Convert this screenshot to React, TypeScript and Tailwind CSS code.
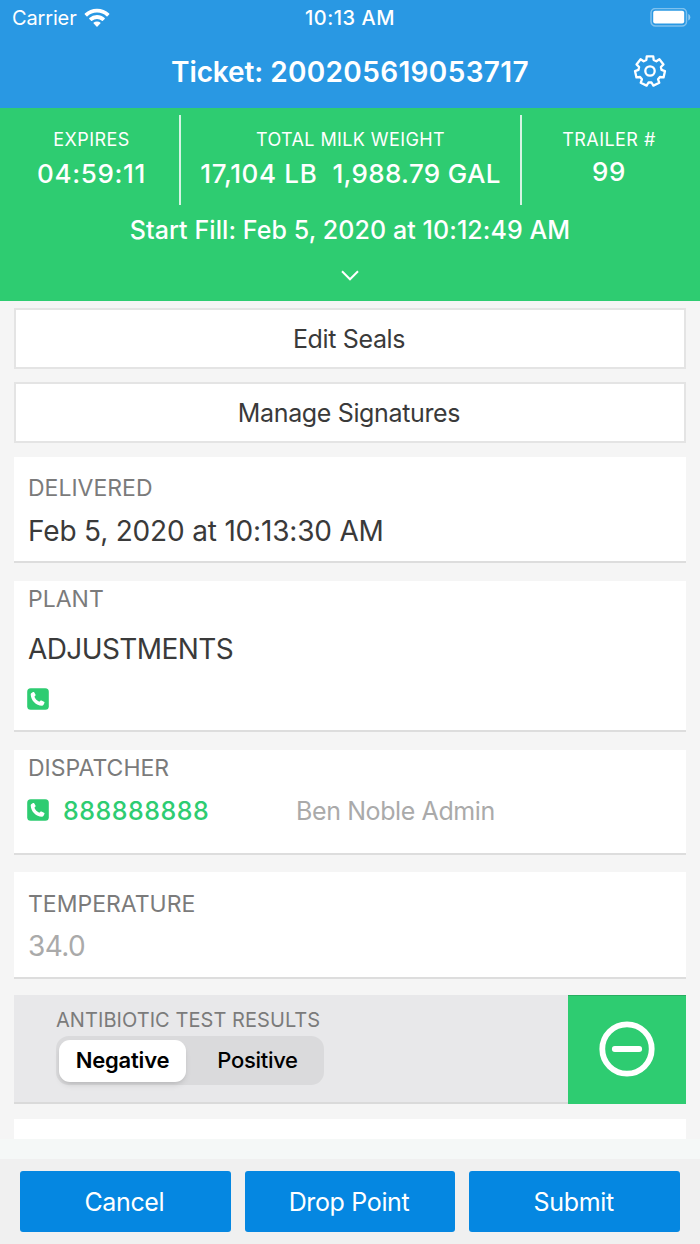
import clsx from "clsx";
import type { ReactNode } from "react";

function WifiIcon() {
  return (
    <svg width="26" height="20" viewBox="0 0 26 20" fill="#fff">
      <path d="M13 0.8c4.700 0 9 1.800 12.200 4.800.3.3.3.7 0 1l-1.700 1.700c-.3.3-.7.3-1 0A13.600 13.600 0 0 0 13 4.600a13.600 13.600 0 0 0-9.500 3.700c-.3.3-.7.3-1 0L.8 6.600c-.3-.3-.3-.7 0-1A17.700 17.700 0 0 1 13 .8z" />
      <path d="M13 7.100c2.900 0 5.600 1.100 7.700 3 .3.3.3.7 0 1l-1.800 1.700c-.3.3-.7.3-1 0a7.200 7.200 0 0 0-9.800 0c-.3.3-.7.3-1 0l-1.800-1.700c-.3-.3-.3-.7 0-1a11.400 11.400 0 0 1 7.700-3z" />
      <path d="M13 13.400c1.300 0 2.400.4 3.300 1.200.3.3.3.7 0 1l-2.800 2.800c-.3.3-.7.3-1 0l-2.800-2.800c-.3-.3-.3-.7 0-1 .9-.8 2-1.200 3.300-1.200z" />
    </svg>
  );
}

function BatteryIcon() {
  return (
    <svg width="42" height="20" viewBox="0 0 42 20" fill="none">
      <rect x="1" y="0.500" width="35.500" height="17.500" rx="4.500" stroke="#fff" strokeOpacity=".4" strokeWidth="1.500" />
      <rect x="3.200" y="2.800" width="31" height="12.800" rx="2" fill="#fff" />
      <path d="M38.300 6c1.200.5 2 1.800 2 3.300s-.8 2.800-2 3.300z" fill="#fff" fillOpacity=".5" />
    </svg>
  );
}

function gearPath() {
  const teeth = 7;
  const points: string[] = [];
  for (let i = 0; i < teeth; i++) {
    const mid = (i / teeth) * Math.PI * 2 - Math.PI / 2;
    [
      [-0.32, 11.6],
      [-0.22, 15],
      [0.22, 15],
      [0.32, 11.6],
    ].forEach(([offset, radius]) => {
      points.push(
        `${17 + radius * Math.cos(mid + offset)} ${17 + radius * Math.sin(mid + offset)}`,
      );
    });
  }
  return `M${points.join("L")}Z`;
}

function GearIcon() {
  return (
    <svg width="34" height="34" viewBox="0 0 34 34" fill="none" stroke="#fff" strokeWidth="2.300" strokeLinejoin="round">
      <path d={gearPath()} />
      <circle cx="17" cy="17" r="4.700" />
    </svg>
  );
}

function PhoneIcon() {
  return (
    <svg className="-ml-px" width="22" height="22" viewBox="0 0 22 22">
      <rect x="0.200" y="0.200" width="21.600" height="21.600" rx="3.500" fill="#2ecc71" />
      <path
        d="M4.200 5.300 6 4.100c.5-.3 1-.2 1.300.3l1.200 2.100c.2.400.1.900-.2 1.200l-.9 1c.9 2.200 2.600 4 4.900 5l1-.9c.3-.3.8-.4 1.200-.2l2.500 1.200c.5.3.7.8.4 1.300l-1 1.900c-.3.5-.8.800-1.400.8C8.900 17.600 4 12.600 3.700 6.500c0-.5.1-.9.5-1.200z"
        fill="#fff"
      />
    </svg>
  );
}

function Card({ children, className }: { children?: ReactNode; className?: string }) {
  return (
    <section className={clsx("border-b-2 border-[#dddddd] bg-white pl-3.5", className)}>
      {children}
    </section>
  );
}

function CardLabel({ children }: { children: ReactNode }) {
  return <h2 className="text-[23px] leading-7 text-[#7b7b7b]">{children}</h2>;
}

function OutlineButton({ children }: { children: ReactNode }) {
  return (
    <button className="h-[61px] w-full border-2 border-[#e4e4e4] bg-white pt-0.5 pr-0.5 text-[25px] tracking-[-0.35px] text-[#3a3a3a]">
      {children}
    </button>
  );
}

const actions = ["Cancel", "Drop Point", "Submit"];

export default function App() {
  return (
    <div className="flex h-[1244px] w-[700px] flex-col overflow-hidden bg-[#f5f5f5] font-['Inter','Liberation_Sans',sans-serif]">
      <header className="h-[108px] shrink-0 bg-[#2998e3] text-white">
        <div className="grid h-9 grid-cols-3 items-center pr-2 pl-3 text-[20px]">
          <div className="flex items-center gap-[7px]">
            <span className="tracking-[-0.15px]">Carrier</span>
            <WifiIcon />
          </div>
          <span className="pr-1 text-center font-medium tracking-[0.5px]">10:13 AM</span>
          <span className="flex justify-end">
            <BatteryIcon />
          </span>
        </div>
        <div className="grid h-[70px] grid-cols-[1fr_auto_1fr] items-center px-[33px]">
          <h1 className="col-start-2 flex gap-[7px] pt-px text-[28px] font-semibold">
            <span className="tracking-[-0.1px]">Ticket:</span>
            <span className="tracking-[0.35px]">200205619053717</span>
          </h1>
          <span className="flex justify-end">
            <GearIcon />
          </span>
        </div>
      </header>

      <section className="h-[193px] shrink-0 bg-[#2ecc71] pt-[7px] text-center text-white">
        <div className="flex h-[90px]">
          <div className="w-[179px] pt-[13px] pl-1">
            <div className="text-[18px] leading-6 tracking-[0.45px]">EXPIRES</div>
            <div className="mt-1.5 text-[26px] leading-8 font-medium tracking-[0.65px]">04:59:11</div>
          </div>
          <div className="w-[343px] border-x-2 border-[#d5f5e3] pt-[13px]">
            <div className="text-[18px] leading-6 tracking-[0.4px]">TOTAL MILK WEIGHT</div>
            <div className="mt-1.5 flex justify-center gap-[15px] text-[26px] leading-8 font-medium">
              <span className="tracking-[0.65px]">17,104 LB</span>
              <span className="tracking-[0.35px]">1,988.79 GAL</span>
            </div>
          </div>
          <div className="w-[178px] pt-[13px] pr-1">
            <div className="text-[18px] leading-6 tracking-[0.45px]">TRAILER #</div>
            <div className="mt-1 text-[26px] leading-8 font-medium tracking-[0.65px]">99</div>
          </div>
        </div>
        <div className="mt-[9px] text-[25px] leading-8 font-medium tracking-[0.08px]">Start Fill: Feb 5, 2020 at 10:12:49 AM</div>
        <svg className="mx-auto mt-6" width="18" height="11" viewBox="0 0 18 11" fill="none" stroke="#fff" strokeWidth="2">
          <path d="m1 1.300 8 8 8-8" />
        </svg>
      </section>

      <main className="h-[838px] shrink-0 overflow-hidden px-3.5 pt-[7px]">
        <div className="flex flex-col gap-[13px]">
          <OutlineButton>Edit Seals</OutlineButton>
          <OutlineButton>Manage Signatures</OutlineButton>
        </div>
        <Card className="mt-[14px] h-[106px] pt-[17px]">
          <CardLabel>DELIVERED</CardLabel>
          <p className="mt-[11px] text-[28px] leading-9 tracking-[-0.18px] text-[#3a3a3a]">Feb 5, 2020 at 10:13:30 AM</p>
        </Card>
        <Card className="mt-[18px] h-[151px] pt-1">
          <CardLabel>PLANT</CardLabel>
          <p className="mt-[18px] mb-[21px] text-[28px] leading-9 tracking-[-0.6px] text-[#3a3a3a]">ADJUSTMENTS</p>
          <PhoneIcon />
        </Card>
        <Card className="mt-[18px] h-[105px] pt-1">
          <CardLabel>DISPATCHER</CardLabel>
          <div className="mt-3 flex h-8 items-center text-[25px]">
            <PhoneIcon />
            <span className="ml-3.5 w-[233px] pt-[3px] font-medium tracking-[0.5px] text-[#2ecc71]">888888888</span>
            <span className="pt-[3px] tracking-[-0.4px] text-[#aaaaaa]">Ben Noble Admin</span>
          </div>
        </Card>
        <Card className="mt-[17px] h-[107px] pt-[18px]">
          <CardLabel>TEMPERATURE</CardLabel>
          <p className="mt-2.5 text-[28px] leading-9 tracking-[-0.6px] text-[#aaaaaa]">34.0</p>
        </Card>
        <section className="mt-4 flex h-[109px] bg-[#e8e8ea]">
          <div className="flex-1 border-b-2 border-[#dadada] pt-[13px] pl-[42px]">
            <h2 className="text-[20px] leading-6 tracking-[0.06px] text-[#7b7b7b]">ANTIBIOTIC TEST RESULTS</h2>
            <div className="mt-1 flex h-[49px] w-[268px] items-center rounded-[13px] bg-[#dadadc] p-[3px] text-[22px] text-black">
              <button className="h-[42px] w-[127px] rounded-[11px] bg-white font-semibold tracking-[-0.2px] shadow-md">Negative</button>
              <button className="flex-1 pl-2 font-medium tracking-[-0.3px]">Positive</button>
            </div>
          </div>
          <div className="flex w-[118px] items-center justify-center border-t border-[#27ae60] bg-[#2ecc71]">
            <svg className="mb-0.5" width="56" height="56" viewBox="0 0 56 56" fill="none" stroke="#fff" strokeWidth="5.800" strokeLinecap="round">
              <circle cx="28" cy="28" r="24.700" />
              <path d="M15.800 28h24.400" />
            </svg>
          </div>
        </section>
        <div className="mt-[15px] h-6 bg-white"></div>
      </main>

      <div className="h-5 shrink-0 bg-[#f5f8f7]"></div>
      <footer className="grid h-[85px] shrink-0 grid-cols-3 gap-3.5 bg-[#f0f0f0] px-5 pt-3">
        {actions.map((action) => (
          <button key={action} className="h-[61px] rounded-[3px] bg-[#0587e1] pt-0.5 pr-0.5 text-[25px] tracking-[-0.35px] text-white">
            {action}
          </button>
        ))}
      </footer>
    </div>
  );
}
